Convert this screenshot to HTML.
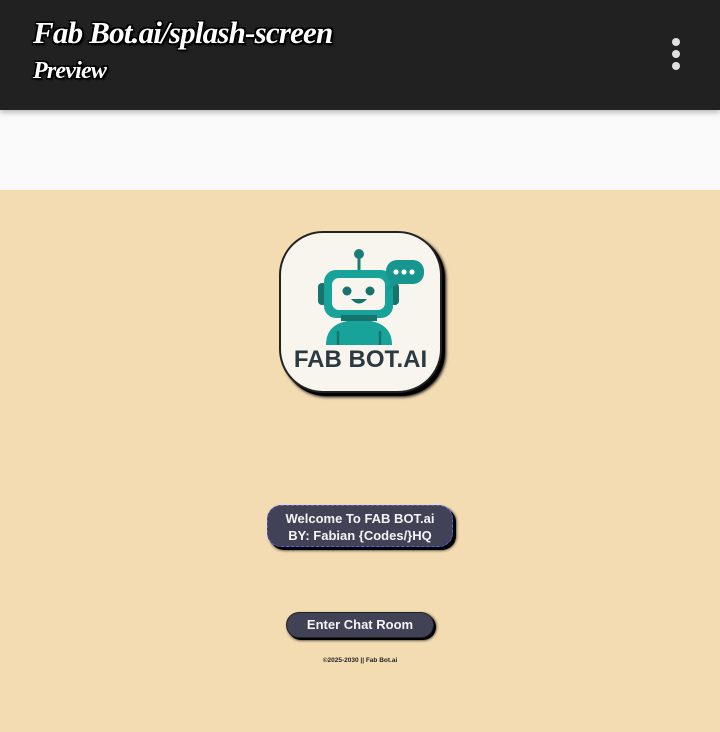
<!DOCTYPE html>
<html><head><meta charset="utf-8"><style>
*{margin:0;padding:0;box-sizing:border-box}
body{width:720px;height:732px;overflow:hidden;background:#f4dcb2;font-family:"Liberation Sans",sans-serif;position:relative}
.hdr{position:absolute;left:0;top:0;width:720px;height:110px;background:#212121;box-shadow:0 2px 6px rgba(0,0,0,.3);z-index:2}
.t1,.t2{position:absolute;left:33px;color:#fff;font-family:"Liberation Serif",serif;font-style:italic;font-weight:bold;text-shadow:-1.5px -1.5px 0 #000,1.5px -1.5px 0 #000,-1.5px 1.5px 0 #000,1.5px 1.5px 0 #000,2px 2px 2px #000;letter-spacing:-0.8px}
.t1{top:15px;font-size:31px}
.t2{top:58px;font-size:24px}
.dot{position:absolute;left:672px;width:8px;height:8px;border-radius:50%;background:#e0e0e0}
.band{position:absolute;left:0;top:110px;width:720px;height:80px;background:#fafafa}
.logo{position:absolute;left:279px;top:231px;width:163px;height:162px;border-radius:44px;background:#f8f5ef;border:2px solid #222;box-shadow:3px 3px 0 #000,4px 4px 3px #000}
.lt{position:absolute;left:0;width:100%;top:113px;text-align:center;font-weight:bold;font-size:24px;color:#2b3a40}
.b1{position:absolute;left:267px;top:505px;width:186px;height:42px;border-radius:14px;background:#414256;border:1.5px dashed #5a5ef0;color:#f4f4f4;font-weight:bold;font-size:13px;text-align:center;line-height:17px;padding-top:4px;box-shadow:3px 3px 0 #000,3px 3px 3px #000}
.b2{position:absolute;left:286px;top:612px;width:148px;height:26px;border-radius:13px;background:#414256;border:1.5px solid #222;color:#f4f4f4;font-weight:bold;font-size:13px;text-align:center;line-height:23px;box-shadow:2px 2px 0 #000,2px 2px 3px #000}
.ft{position:absolute;left:0;width:720px;top:657px;text-align:center;font-size:6.5px;color:#222;font-weight:bold}
</style></head><body>
<div class="hdr">
<div class="t1">Fab Bot.ai/splash-screen</div>
<div class="t2">Preview</div>
<div class="dot" style="top:38px"></div><div class="dot" style="top:50px"></div><div class="dot" style="top:62px"></div>
</div>
<div class="band"></div>
<div class="logo">
<svg width="163" height="120" viewBox="0 0 163 120" style="position:absolute;left:0;top:0">
<line x1="78" y1="22" x2="78" y2="38" stroke="#1c7d78" stroke-width="3"/>
<circle cx="78" cy="21" r="5" fill="#1c7d78"/>
<rect x="37" y="50" width="9" height="22" rx="4" fill="#16736e"/>
<rect x="109" y="50" width="9" height="22" rx="4" fill="#16736e"/>
<rect x="43" y="37" width="69" height="48" rx="12" fill="#18a39a"/>
<rect x="51" y="45" width="53" height="32" rx="7" fill="#f8f5ef"/>
<circle cx="66" cy="58" r="4.5" fill="#16736e"/>
<circle cx="89" cy="58" r="4.5" fill="#16736e"/>
<path d="M70 66 Q78 75 86 66 Z" fill="#16736e"/>
<rect x="105" y="27" width="38" height="24" rx="11" fill="#16968e"/>
<path d="M111 47 L106 58 L119 49 Z" fill="#16968e"/>
<circle cx="115" cy="39" r="2.6" fill="#fff"/><circle cx="123" cy="39" r="2.6" fill="#fff"/><circle cx="131" cy="39" r="2.6" fill="#fff"/>
<path d="M45 112 Q45 87 78 87 Q111 87 111 112 Z" fill="#18a39a"/>
<rect x="60" y="82" width="36" height="6" fill="#16736e"/>
<line x1="57" y1="98" x2="57" y2="112" stroke="#16736e" stroke-width="2.5"/>
<line x1="99" y1="98" x2="99" y2="112" stroke="#16736e" stroke-width="2.5"/>
</svg>
<div class="lt">FAB BOT.AI</div>
</div>
<div class="b1">Welcome To FAB BOT.ai<br>BY: Fabian {Codes/}HQ</div>
<div class="b2">Enter Chat Room</div>
<div class="ft">©2025-2030 || Fab Bot.ai</div>
</body></html>
